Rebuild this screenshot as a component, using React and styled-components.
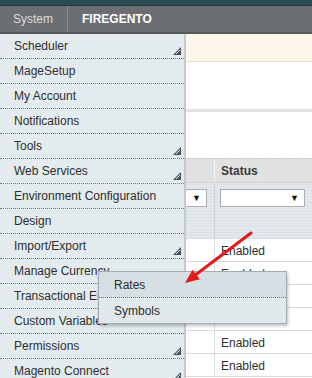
import React from "react";
import styled, { createGlobalStyle } from "styled-components";

const GlobalStyle = createGlobalStyle`
  html, body {
    margin: 0;
    padding: 0;
    background: #ffffff;
    overflow: hidden;
  }
  body {
    font-family: "Liberation Sans", Arial, sans-serif;
  }
`;

const Page = styled.div`
  position: relative;
  width: 312px;
  height: 378px;
  overflow: hidden;
  background: #ffffff;
`;

const TopStrip = styled.div`
  height: 5px;
  background: #2d4b52;
  border-bottom: 1px solid #22383d;
`;

const NavBar = styled.div`
  height: 26px;
  background: #6b6e72;
  border-bottom: 2px solid #55585b;
  display: flex;
  align-items: stretch;
`;

const NavItem = styled.div`
  display: flex;
  align-items: center;
  padding: 0 14px 0 ${(p) => (p.$first ? "13px" : "14px")};
  font-size: 12px;
  font-weight: ${(p) => (p.$bold ? 700 : 400)};
  color: ${(p) => (p.$bold ? "#ffffff" : "#dcdee0")};
  border-right: ${(p) => (p.$sep ? "1px solid #898c90" : "none")};
`;

const Content = styled.div`
  display: flex;
  flex-direction: column;
`;

const Notice = styled.div`
  height: 27px;
  background: #fdf7e9;
  border-bottom: 1px solid #e8e1c3;
`;

const Spacer = styled.div`
  height: ${(p) => p.$h}px;
`;

const Rule = styled.div`
  height: 3px;
  background: #e2e2e2;
`;

const Grid = styled.div`
  display: grid;
  grid-template-columns: 215px 1fr;
  border-top: 1px solid #cfcfcf;
`;

const HeadCell = styled.div`
  height: 23px;
  display: flex;
  align-items: center;
  padding-left: 6px;
  font-size: 12px;
  font-weight: 700;
  color: #3a3a3a;
  background: repeating-linear-gradient(
    45deg,
    #e3e3e3 0px,
    #e3e3e3 2px,
    #dedede 2px,
    #dedede 3px
  );
  border-bottom: 1px solid #cfcfcf;
  border-right: ${(p) => (p.$sep ? "1px solid #f4f4f4" : "none")};
`;

const FilterCell = styled.div`
  height: 56px;
  padding: 6px 7px 0 5px;
  box-sizing: border-box;
  background: repeating-linear-gradient(
    0deg,
    #e2e8eb 0px,
    #e2e8eb 2px,
    #dce3e6 2px,
    #dce3e6 3px
  );
  border-right: ${(p) => (p.$sep ? "1px solid #c9d1d4" : "none")};
  border-bottom: 1px solid #d6dcdf;
`;

const Select = styled.div`
  height: 18px;
  box-sizing: border-box;
  background: #ffffff;
  border: 1px solid #a9afb2;
  display: flex;
  align-items: center;
  justify-content: flex-end;
  padding-right: 5px;
  font-size: 9px;
  color: #111;
`;

const RowCell = styled.div`
  height: 23px;
  box-sizing: border-box;
  display: flex;
  align-items: center;
  padding-left: 6px;
  padding-top: 1px;
  font-size: 12px;
  color: #2f2f2f;
  border-bottom: 1px solid #dadada;
  border-right: ${(p) => (p.$sep ? "1px solid #dadada" : "none")};
`;

const Menu = styled.ul`
  position: absolute;
  left: 0;
  top: 34px;
  width: 184px;
  margin: 0;
  padding: 0;
  list-style: none;
  background: #e3ebee;
  border-right: 2px solid #c3cacd;
`;

const MenuItem = styled.li`
  position: relative;
  height: 24px;
  display: flex;
  align-items: center;
  padding-left: 14px;
  font-size: 12px;
  color: #2e2e2e;
  white-space: nowrap;
  border-bottom: 1px dotted #6f7a80;
`;

const Grip = styled.svg`
  position: absolute;
  right: 3px;
  bottom: 3px;
`;

const SubMenu = styled.ul`
  position: absolute;
  left: 98px;
  top: 271px;
  width: 187px;
  margin: 0;
  padding: 0;
  list-style: none;
  background: #e1e9ec;
  border: 1px solid #a3acb0;
  box-shadow: 1px 2px 3px rgba(0, 0, 0, 0.25);
`;

const SubItem = styled.li`
  height: 25px;
  display: flex;
  align-items: center;
  padding-left: 15px;
  font-size: 12px;
  color: #2e2e2e;
  background: ${(p) => (p.$hover ? "#d6e0e4" : "transparent")};
  border-bottom: ${(p) => (p.$sep ? "1px dotted #6f7a80" : "none")};
`;

const Pointer = styled.svg`
  position: absolute;
  left: 178px;
  top: 226px;
`;

const GripIcon = () => (
  <Grip width="8" height="8" viewBox="0 0 8 8">
    <polygon points="8,0 8,8 0,8" fill="#4b5257" />
    <line x1="7" y1="3" x2="3" y2="7" stroke="#e3ebee" strokeWidth="1" />
  </Grip>
);

const items = [
  { label: "Scheduler", sub: true },
  { label: "MageSetup" },
  { label: "My Account" },
  { label: "Notifications" },
  { label: "Tools", sub: true },
  { label: "Web Services", sub: true },
  { label: "Environment Configuration" },
  { label: "Design" },
  { label: "Import/Export", sub: true },
  { label: "Manage Currency", sub: true },
  { label: "Transactional Emails" },
  { label: "Custom Variables" },
  { label: "Permissions", sub: true },
  { label: "Magento Connect", sub: true },
];

const App = () => {
  const rows = 6;
  return (
    <>
      <GlobalStyle />
      <Page>
        <TopStrip />
        <NavBar>
          <NavItem $first $sep>
            System
          </NavItem>
          <NavItem $bold>FIREGENTO</NavItem>
        </NavBar>

        <Content>
          <Notice />
          <Spacer $h={47} />
          <Rule />
          <Spacer $h={46} />
          <Grid>
            <HeadCell $sep />
            <HeadCell>Status</HeadCell>
            <FilterCell $sep>
              <Select>▼</Select>
            </FilterCell>
            <FilterCell>
              <Select>▼</Select>
            </FilterCell>
            {Array.from({ length: rows }).map((_, i) => (
              <React.Fragment key={i}>
                <RowCell $sep />
                <RowCell>Enabled</RowCell>
              </React.Fragment>
            ))}
          </Grid>
        </Content>

        <Menu>
          {items.map((it) => (
            <MenuItem key={it.label}>
              {it.label}
              {it.sub && <GripIcon />}
            </MenuItem>
          ))}
        </Menu>

        <SubMenu>
          <SubItem $hover $sep>
            Rates
          </SubItem>
          <SubItem>Symbols</SubItem>
        </SubMenu>

        <Pointer width="80" height="64" viewBox="0 0 80 64">
          <line
            x1="73"
            y1="7"
            x2="18"
            y2="48.5"
            stroke="#e5181c"
            strokeWidth="3"
            strokeLinecap="round"
          />
          <polygon points="7,57 21.8,53.3 14.5,43.8" fill="#e5181c" />
        </Pointer>
      </Page>
    </>
  );
};

export default App;
